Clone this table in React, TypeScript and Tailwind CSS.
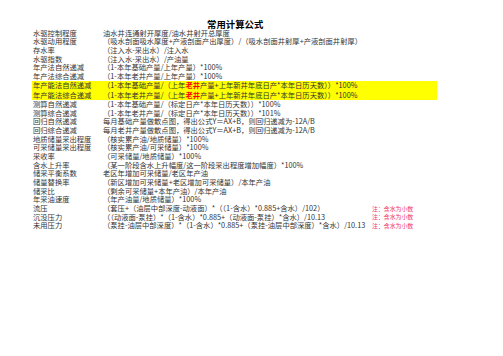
type Row = {
  name: string;
  formula: React.ReactNode;
  highlight?: boolean;
  note?: string;
};

const RED = (t: string) => <span className="font-bold text-[#ff0000]">{t}</span>;

const ROWS: Row[] = [
  { name: '水驱控制程度', formula: '油水井连通射开厚度/油水井射开总厚度' },
  { name: '水驱动用程度', formula: '（吸水剖面吸水厚度+产液剖面产出厚度）/（吸水剖面井射厚+产液剖面井射厚）' },
  { name: '存水率', formula: '（注入水-采出水）/注入水' },
  { name: '水驱指数', formula: '（注入水-采出水）/产油量' },
  { name: '年产法自然递减', formula: '（1-本年基础产量/上年产量）*100%' },
  { name: '年产法综合递减', formula: '（1-本年老井产量/上年产量）*100%' },
  {
    name: '年产能法自然递减',
    highlight: true,
    formula: <>（1-本年基础产量/（上年{RED('老井')}产量+上年新井年底日产*本年日历天数））*100%</>,
  },
  {
    name: '年产能法综合递减',
    highlight: true,
    formula: <>（1-本年老井产量/（上年{RED('老井')}产量+上年新井年底日产*本年日历天数））*100%</>,
  },
  { name: '测算自然递减', formula: '（1-本年基础产量/（标定日产*本年日历天数））*100%' },
  { name: '测算综合递减', formula: '（1-本年老井产量/（标定日产*本年日历天数））*101%' },
  { name: '回归自然递减', formula: '每月基础产量做散点图，得出公式Y＝AX+B，则回归递减为-12A/B' },
  { name: '回归综合递减', formula: '每月老井产量做散点图，得出公式Y＝AX+B，则回归递减为-12A/B' },
  { name: '地质储量采出程度', formula: '（核实累产油/地质储量）*100%' },
  { name: '可采储量采出程度', formula: '（核实累产油/可采储量）*100%' },
  { name: '采收率', formula: '（可采储量/地质储量）*100%' },
  { name: '含水上升率', formula: '（某一阶段含水上升幅度/这一阶段采出程度增加幅度）*100%' },
  { name: '储采平衡系数', formula: '老区年增加可采储量/老区年产油' },
  { name: '储量替换率', formula: '（新区增加可采储量+老区增加可采储量）/本年产油' },
  { name: '储采比', formula: '（剩余可采储量+本年产油）/本年产油' },
  { name: '年采油速度', formula: '（年产油量/地质储量）*100%' },
  {
    name: '流压',
    formula: '（套压+（油层中部深度-动液面）*（（1-含水）*0.885+含水）/102）',
    note: '注：含水为小数',
  },
  {
    name: '沉没压力',
    formula: '（（动液面-泵挂）*（1-含水）*0.885+（动液面-泵挂）*含水）/10.13',
    note: '注：含水为小数',
  },
  {
    name: '未用压力',
    formula: '（泵挂-油层中部深度）*（1-含水）*0.885+（泵挂-油层中部深度）*含水）/10.13',
    note: '注：含水为小数',
  },
];

export default function App(): React.ReactElement {
  return (
    <div className="h-[356px] w-[503px] overflow-hidden bg-white font-['Noto_Sans_CJK_SC','Noto_Sans',sans-serif] text-[#333]">
      <div className="h-[29px] pl-[207px] pt-[19px] text-[9.4px] font-bold leading-[10px] text-black">
        常用计算公式
      </div>

      <div className="flex flex-col">
        {ROWS.map((row) => (
          <div
            key={row.name}
            className={`ml-[32px] flex w-[405px] items-center whitespace-nowrap text-[7.3px] leading-none ${
              row.highlight ? 'h-[9.5px] bg-[#ffff00]' : 'h-[8.7px]'
            }`}
          >
            <div className="w-[71px] shrink-0 pl-[1px]">{row.name}</div>
            <div className="w-[269px] shrink-0">{row.formula}</div>
            {row.note && <div className="text-[5.9px] text-[#f0336e]">{row.note}</div>}
          </div>
        ))}
      </div>
    </div>
  );
}
